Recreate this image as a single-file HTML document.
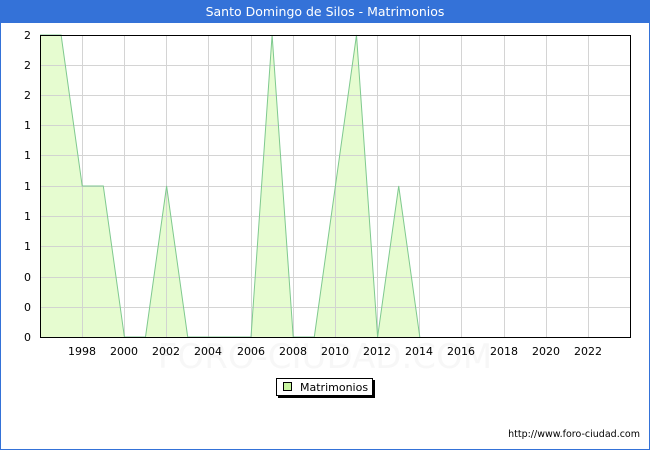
<!DOCTYPE html>
<html><head><style>
body{margin:0;width:650px;height:450px;overflow:hidden;background:#fff;font-family:"DejaVu Sans","Liberation Sans",sans-serif;}
</style></head><body>
<svg width="650" height="450" xmlns="http://www.w3.org/2000/svg" font-family="DejaVu Sans, Liberation Sans, sans-serif">
<rect x="0.5" y="0.5" width="649" height="449" fill="#fff" stroke="#3472d8"/>
<rect x="0" y="0" width="650" height="23" fill="#3472d8"/>
<text x="325" y="16" fill="#fff" font-size="12.5" text-anchor="middle">Santo Domingo de Silos - Matrimonios</text>
<polygon fill="#e6fcd0" stroke="none" points="40,337 40,35 61.1,35 82.2,186 103.3,186 124.4,337 145.5,337 166.6,186 187.7,337 251,337 272.1,35 293.2,337 314.3,337 335.4,186 356.5,35 377.6,337 398.7,186 419.8,337"/>
<g stroke="#d0d0d0" stroke-width="1" opacity="0.9">
<line x1="40" y1="65.5" x2="630" y2="65.5"/><line x1="40" y1="95.5" x2="630" y2="95.5"/><line x1="40" y1="125.5" x2="630" y2="125.5"/><line x1="40" y1="155.5" x2="630" y2="155.5"/><line x1="40" y1="186.5" x2="630" y2="186.5"/><line x1="40" y1="216.5" x2="630" y2="216.5"/><line x1="40" y1="246.5" x2="630" y2="246.5"/><line x1="40" y1="277.5" x2="630" y2="277.5"/><line x1="40" y1="307.5" x2="630" y2="307.5"/>
<line x1="82.5" y1="35" x2="82.5" y2="337"/><line x1="124.5" y1="35" x2="124.5" y2="337"/><line x1="166.5" y1="35" x2="166.5" y2="337"/><line x1="208.5" y1="35" x2="208.5" y2="337"/><line x1="251.5" y1="35" x2="251.5" y2="337"/><line x1="293.5" y1="35" x2="293.5" y2="337"/><line x1="335.5" y1="35" x2="335.5" y2="337"/><line x1="377.5" y1="35" x2="377.5" y2="337"/><line x1="419.5" y1="35" x2="419.5" y2="337"/><line x1="461.5" y1="35" x2="461.5" y2="337"/><line x1="504.5" y1="35" x2="504.5" y2="337"/><line x1="546.5" y1="35" x2="546.5" y2="337"/><line x1="588.5" y1="35" x2="588.5" y2="337"/>
</g>
<polyline fill="none" stroke="#7fc98f" stroke-width="1" points="40,35 61.1,35 82.2,186 103.3,186 124.4,337 145.5,337 166.6,186 187.7,337 251,337 272.1,35 293.2,337 314.3,337 335.4,186 356.5,35 377.6,337 398.7,186 419.8,337"/>
<text x="325" y="368" fill="#f2f2f2" font-size="34" text-anchor="middle" opacity="0.6">FORO-CIUDAD.COM</text>
<rect x="40.5" y="35.5" width="590" height="302" fill="none" stroke="#000"/>
<g font-size="11" fill="#000" text-anchor="end">
<text x="31" y="39">2</text><text x="31" y="69">2</text><text x="31" y="99">2</text><text x="31" y="129">1</text><text x="31" y="159">1</text><text x="31" y="190">1</text><text x="31" y="220">1</text><text x="31" y="250">1</text><text x="31" y="281">0</text><text x="31" y="311">0</text><text x="31" y="341">0</text>
</g>
<g font-size="11" fill="#000" text-anchor="middle">
<text x="82" y="355">1998</text><text x="124" y="355">2000</text><text x="166" y="355">2002</text><text x="208" y="355">2004</text><text x="251" y="355">2006</text><text x="293" y="355">2008</text><text x="335" y="355">2010</text><text x="377" y="355">2012</text><text x="419" y="355">2014</text><text x="461" y="355">2016</text><text x="504" y="355">2018</text><text x="546" y="355">2020</text><text x="588" y="355">2022</text>
</g>
<rect x="278" y="380" width="97" height="18" fill="#000"/>
<rect x="276.5" y="378.5" width="96" height="17" fill="#fff" stroke="#000"/>
<rect x="283.5" y="382.5" width="8" height="8" fill="#c8f5a0" stroke="#000"/>
<text x="300" y="391" font-size="11">Matrimonios</text>
<text x="640" y="437" font-size="9.5" text-anchor="end">http://www.foro-ciudad.com</text>
</svg>
</body></html>
